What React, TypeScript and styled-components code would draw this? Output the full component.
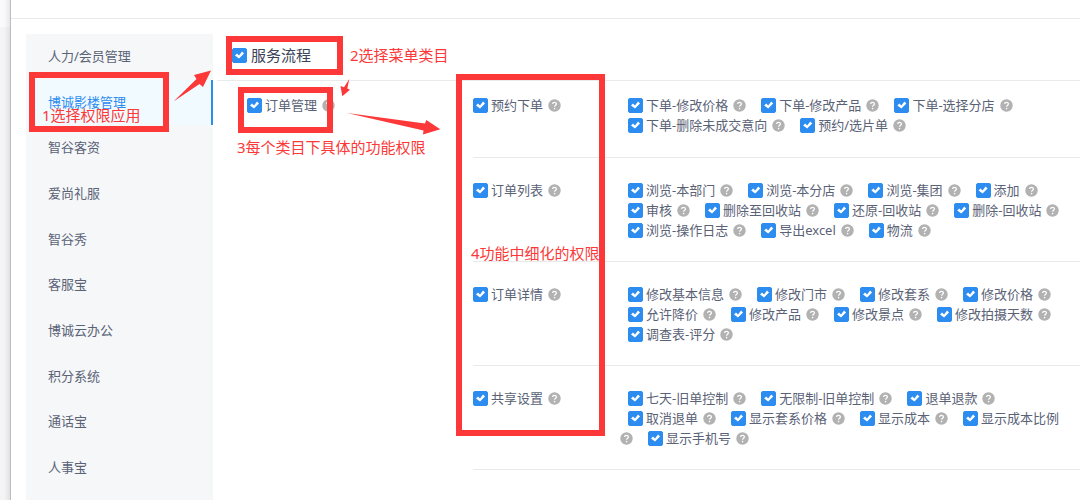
import React, { useId, useState } from "react";
import styled, { createGlobalStyle } from "styled-components";

const RED = "#fc3838";
const LINE = "#e8eaec";

const GlobalStyle = createGlobalStyle`
  *, *::before, *::after { box-sizing: border-box; }
  body {
    margin: 0;
    background: #f4f4f4;
    color: #515a6e;
    font: 13px/20px "Noto Sans", "Noto Sans CJK SC", sans-serif;
  }
`;

const Page = styled.div`
  position: relative;
  display: flex;
  height: 100vh;
  overflow: hidden;
`;

const Backdrop = styled.div`
  flex: none;
  width: 10px;
  background: linear-gradient(to right, #f4f4f4 40%, #e2e2e2);

  &::before {
    content: "";
    display: block;
    height: 27px;
    background: linear-gradient(to right, #fafafa 40%, #e8e8e8);
  }
`;

const Drawer = styled.div`
  flex: 1;
  min-width: 0;
  display: flex;
  flex-direction: column;
  border-left: 1px solid #b9bcc4;
  background: #fff;
`;

const DrawerHeader = styled.header`
  flex: none;
  height: 19px;
  border-bottom: 1px solid ${LINE};
`;

const Body = styled.div`
  flex: 1;
  min-height: 0;
  display: flex;
  gap: 4px;
  padding: 15px 0 0 15px;
`;

const Sidebar = styled.nav`
  flex: none;
  width: 187px;
  background: #f5f7f9;
`;

const AppList = styled.ul`
  display: grid;
  grid-auto-rows: 1fr;
  min-height: 457px;
  margin: 0;
  padding: 0;
  list-style: none;
`;

const AppLink = styled.a<{ $active: boolean }>`
  display: flex;
  align-items: center;
  height: 100%;
  padding: 0 0 2px 22px;
  border-right: 2px solid ${(p) => (p.$active ? "#2d8cf0" : "transparent")};
  background: ${(p) => (p.$active ? "#f0faff" : "transparent")};
  color: ${(p) => (p.$active ? "#2d8cf0" : "#5a6276")};
  text-decoration: none;
`;

const Content = styled.main`
  flex: 1;
  min-width: 0;
`;

const Category = styled.div`
  height: 47px;
  padding: 11px 0 0 15px;
  border-bottom: 1px solid ${LINE};
`;

const Module = styled.section`
  display: grid;
  grid-template-columns: 226px 1fr;
  padding-left: 30px;
`;

const ModuleTitle = styled.div`
  padding-top: 14px;
`;

const FeatureRow = styled.div`
  display: grid;
  grid-template-columns: 147px 1fr;
  padding: 22px 0 21px;
  border-bottom: 1px solid ${LINE};

  &:first-child {
    padding: 14px 0 22px;
  }
`;

const Options = styled.div`
  padding-right: 12px;
  font-size: 0;
`;

const Label = styled.label<{ $large?: boolean }>`
  display: inline-flex;
  align-items: center;
  gap: ${(p) => (p.$large ? "4px" : "3px")};
  height: 20px;
  padding-right: 5px;
  font-size: ${(p) => (p.$large ? "15px" : "13px")};
  color: ${(p) => (p.$large ? "#3c4358" : "#5a6276")};
  white-space: nowrap;
  vertical-align: top;

  ${Options} & {
    margin-left: 8px;
  }
`;

const Tick = styled.input`
  appearance: none;
  flex: none;
  display: grid;
  width: 15px;
  height: 15px;
  margin: 0;
  border: 1px solid #2d8cf0;
  border-radius: 2px;
  background: #fff;

  &:checked {
    background: #2d8cf0;
  }

  &:checked::before {
    content: "";
    background: #fff;
    clip-path: polygon(2px 7px, 4px 5px, 6px 7px, 9px 3px, 11px 5px, 6px 10px);
  }
`;

const HelpButton = styled.button`
  display: inline-flex;
  align-items: center;
  height: 20px;
  margin: 0 7px 0 0;
  padding: 0;
  border: 0;
  background: none;
  vertical-align: top;
`;

function Help({ topic }: { topic: string }) {
  return (
    <HelpButton type="button" aria-label={topic}>
      <svg width="13" height="13" viewBox="0 0 13 13" aria-hidden="true">
        <circle cx="6.5" cy="6.5" r="6.2" fill="#b2b2b2" />
        <path d="M4.6 5.1C4.6 2.7 8.4 2.8 8.4 4.9C8.4 6.2 6.6 6.2 6.6 7.7" fill="none" stroke="#fff" strokeWidth="1.2" />
        <circle cx="6.6" cy="9.6" r="0.8" fill="#fff" />
      </svg>
    </HelpButton>
  );
}

function Check({ text, large, help = true }: { text: string; large?: boolean; help?: boolean }) {
  const id = useId();
  const [on, setOn] = useState(true);
  return (
    <>
      <Label htmlFor={id} $large={large}>
        <Tick id={id} type="checkbox" checked={on} onChange={() => setOn(!on)} />
        {text}
      </Label>
      {help && (
        <>
          <wbr />
          <Help topic={text} />
        </>
      )}
    </>
  );
}

const Frame = styled.div<{ $x: number; $y: number; $w: number; $h: number }>`
  position: absolute;
  left: ${(p) => p.$x}px;
  top: ${(p) => p.$y}px;
  width: ${(p) => p.$w}px;
  height: ${(p) => p.$h}px;
  border: 6px solid ${RED};
  pointer-events: none;
`;

const Note = styled.span<{ $x: number; $y: number }>`
  position: absolute;
  left: ${(p) => p.$x}px;
  top: ${(p) => p.$y}px;
  color: ${RED};
  font-size: 15px;
  white-space: nowrap;
  pointer-events: none;
`;

const Arrows = styled.svg`
  position: absolute;
  left: 0;
  top: 0;
  pointer-events: none;
`;

const apps = [
  "人力/会员管理", "博诚影楼管理", "智谷客资", "爱尚礼服", "智谷秀",
  "客服宝", "博诚云办公", "积分系统", "通话宝", "人事宝",
];

const features = [
  {
    name: "预约下单",
    options: ["下单-修改价格", "下单-修改产品", "下单-选择分店", "下单-删除未成交意向", "预约/选片单"],
  },
  {
    name: "订单列表",
    options: [
      "浏览-本部门", "浏览-本分店", "浏览-集团", "添加", "审核", "删除至回收站",
      "还原-回收站", "删除-回收站", "浏览-操作日志", "导出excel", "物流",
    ],
  },
  {
    name: "订单详情",
    options: [
      "修改基本信息", "修改门市", "修改套系", "修改价格", "允许降价",
      "修改产品", "修改景点", "修改拍摄天数", "调查表-评分",
    ],
  },
  {
    name: "共享设置",
    options: [
      "七天-旧单控制", "无限制-旧单控制", "退单退款", "取消退单",
      "显示套系价格", "显示成本", "显示成本比例", "显示手机号",
    ],
  },
];

export default function App() {
  const [active, setActive] = useState(1);
  return (
    <Page>
      <GlobalStyle />
      <Backdrop />
      <Drawer>
        <DrawerHeader />
        <Body>
          <Sidebar>
            <AppList>
              {apps.map((name, i) => (
                <li key={name}>
                  <AppLink href="#" $active={i === active} onClick={() => setActive(i)}>
                    {name}
                  </AppLink>
                </li>
              ))}
            </AppList>
          </Sidebar>
          <Content>
            <Category>
              <Check text="服务流程" large help={false} />
            </Category>
            <Module>
              <ModuleTitle>
                <Check text="订单管理" />
              </ModuleTitle>
              <div>
                {features.map((f) => (
                  <FeatureRow key={f.name}>
                    <div>
                      <Check text={f.name} />
                    </div>
                    <Options>
                      {f.options.map((o) => (
                        <Check key={o} text={o} />
                      ))}
                    </Options>
                  </FeatureRow>
                ))}
              </div>
            </Module>
          </Content>
        </Body>
      </Drawer>
      <Frame $x={29} $y={72} $w={140} $h={60} />
      <Frame $x={226} $y={36} $w={117} $h={39} />
      <Frame $x={238} $y={87} $w={95} $h={46} />
      <Frame $x={456} $y={74} $w={149} $h={362} />
      <Note $x={42} $y={105}>1选择权限应用</Note>
      <Note $x={350} $y={45}>2选择菜单类目</Note>
      <Note $x={237} $y={137}>3每个类目下具体的功能权限</Note>
      <Note $x={471} $y={243}>4功能中细化的权限</Note>
      <Arrows width="450" height="140" viewBox="0 0 450 140" fill={RED} aria-hidden="true">
        <path d="M173.5 101.5L196.5 79L194 75L211 70.500L203 87L199.500 84Z" />
        <path d="M349.300 79L344 87.300L340.500 86L342.300 96.300L350 89.700L347.300 88.600Z" />
        <path d="M347 113L425 123.500L426.300 120L440.300 129.300L423 134.500L423.500 130.500Z" />
      </Arrows>
    </Page>
  );
}
